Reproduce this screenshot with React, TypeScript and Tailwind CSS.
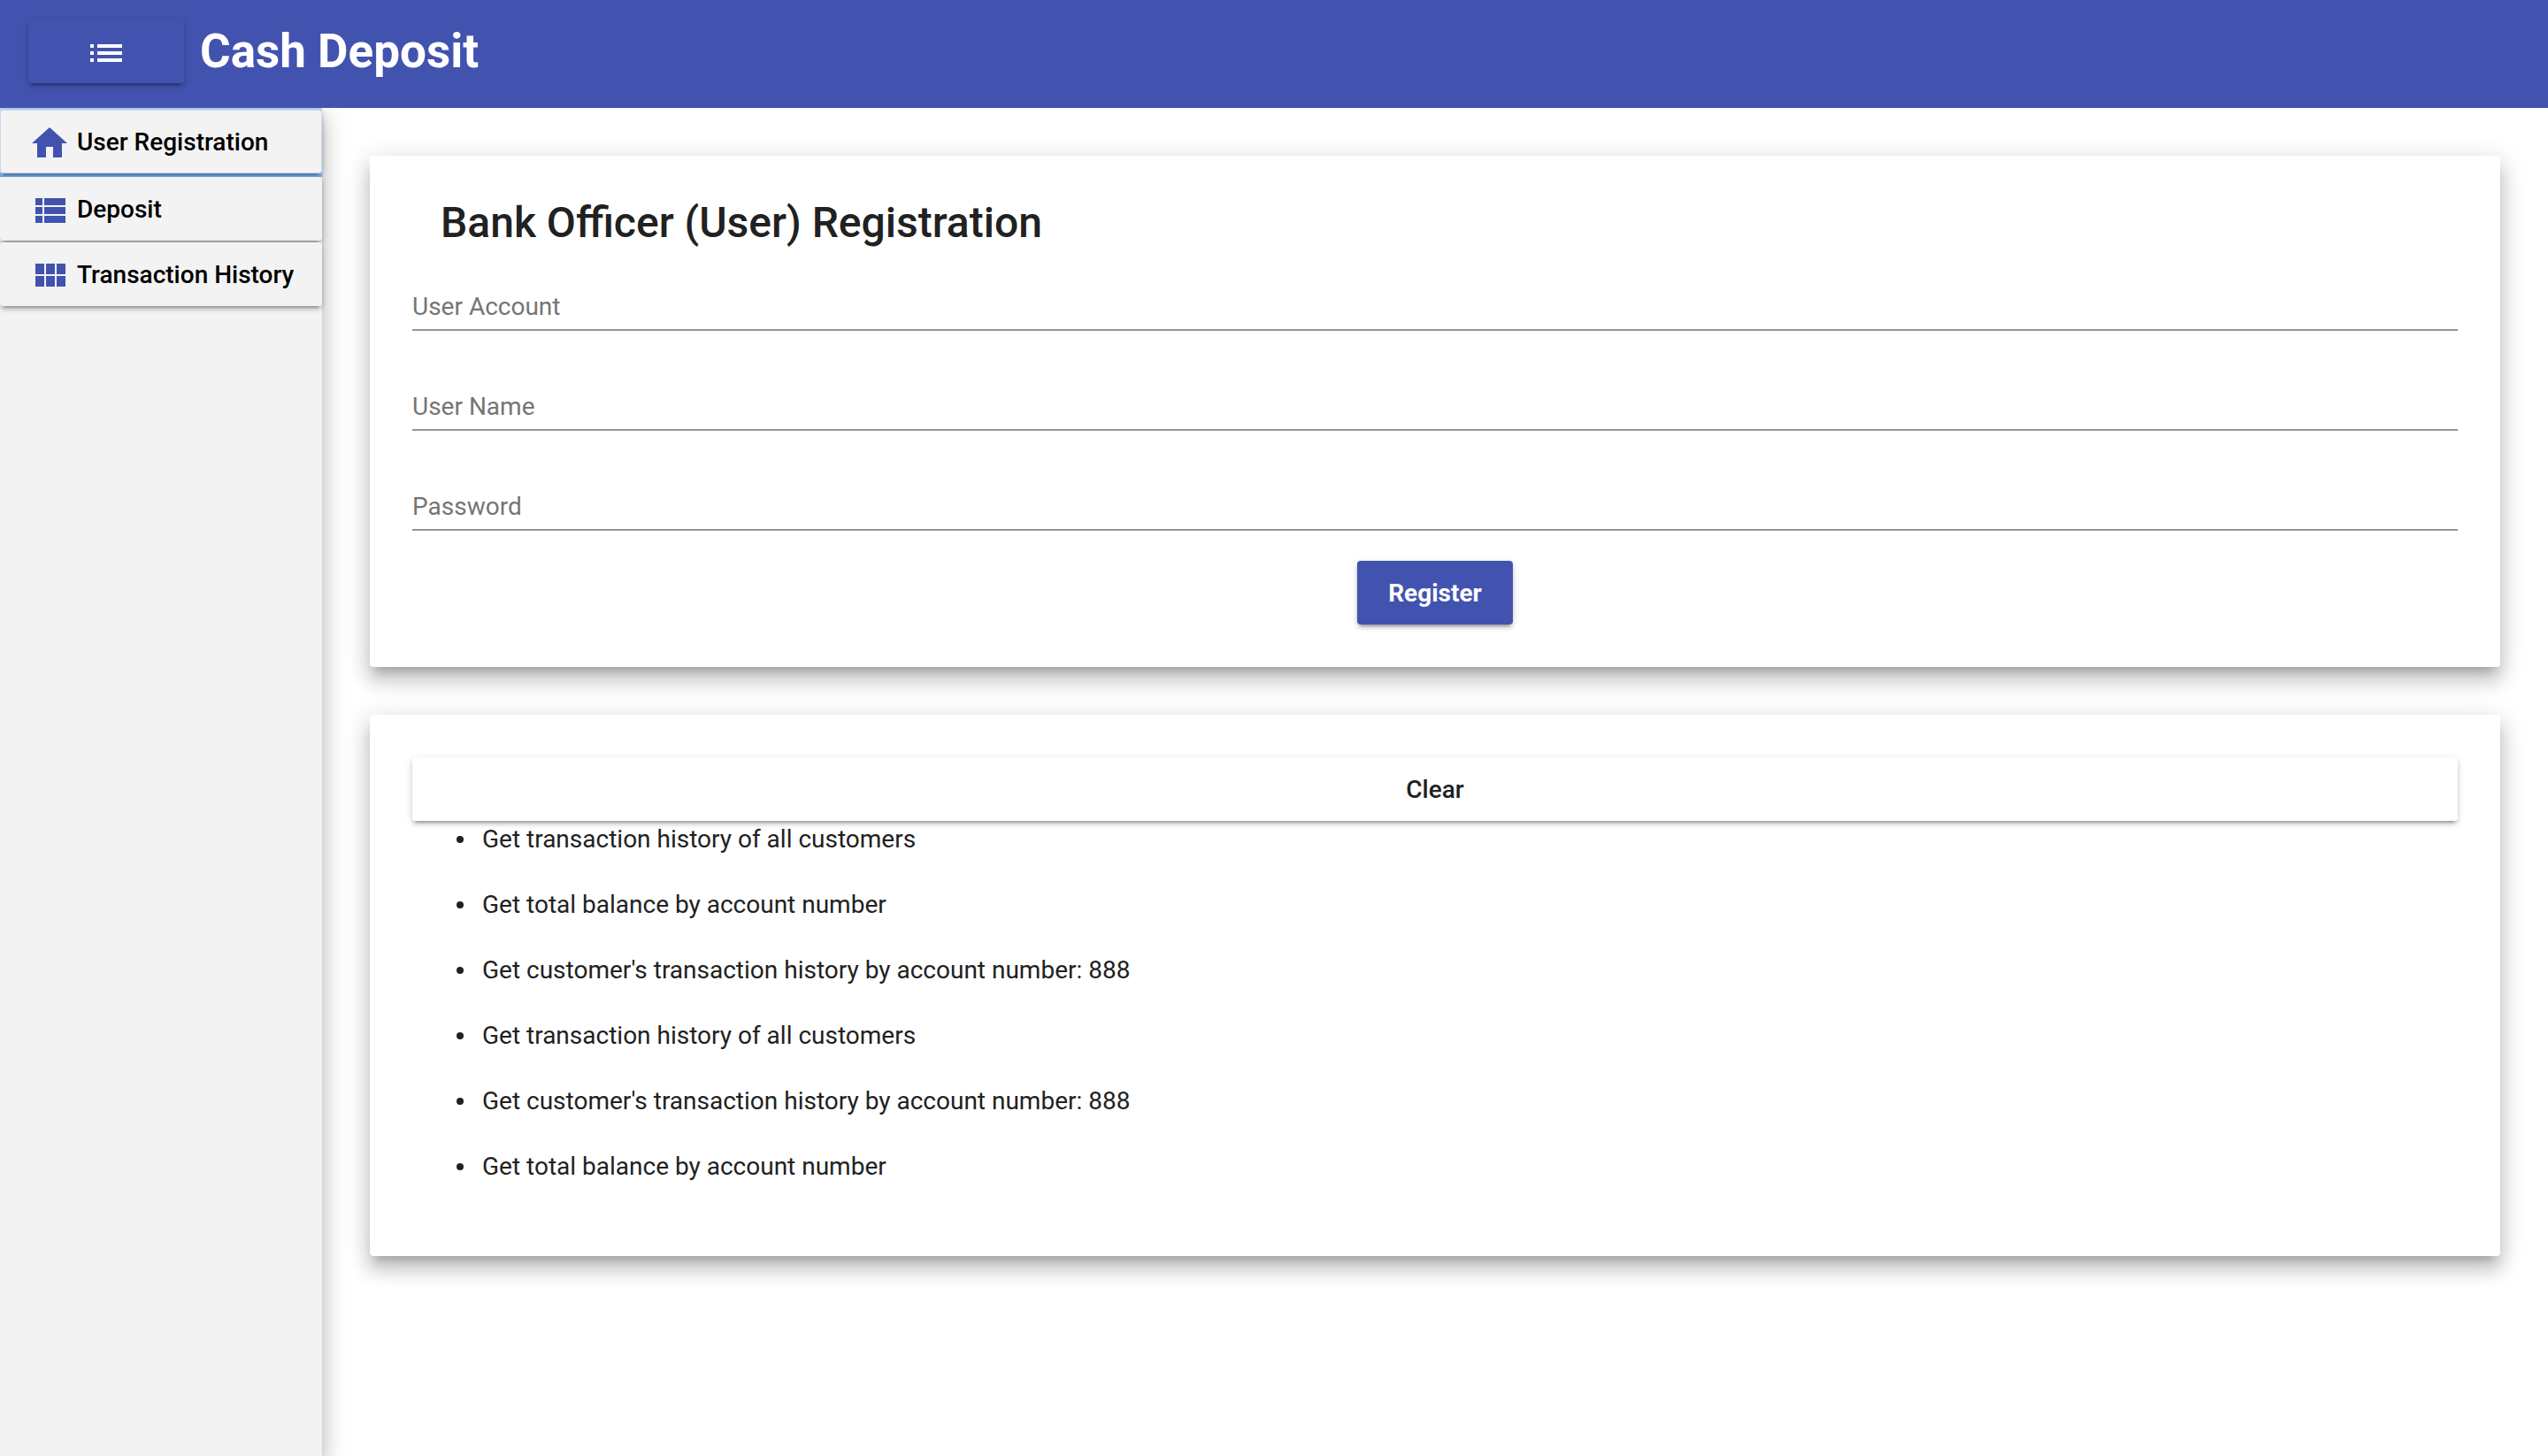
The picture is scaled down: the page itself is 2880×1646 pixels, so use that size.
import type { ReactNode } from "react";

const raised =
  "rounded shadow-[0_6px_2px_-4px_rgba(0,0,0,0.2),0_4px_4px_0_rgba(0,0,0,0.14),0_2px_10px_0_rgba(0,0,0,0.12)]";
const elevated =
  "shadow-[0_10px_10px_-6px_rgba(0,0,0,0.2),0_16px_20px_2px_rgba(0,0,0,0.14),0_6px_28px_4px_rgba(0,0,0,0.12)]";

function Icon({ d }: { d: string }) {
  return (
    <svg className="size-12 shrink-0" viewBox="0 0 24 24" fill="currentColor" aria-hidden="true">
      <path d={d} />
    </svg>
  );
}

const LIST =
  "M3 13h2v-2H3v2zm0 4h2v-2H3v2zm0-8h2V7H3v2zm4 4h14v-2H7v2zm0 4h14v-2H7v2zM7 7v2h14V7H7z";
const HOME = "M10 20v-6h4v6h5v-8h3L12 3 2 12h3v8z";
const VIEW_LIST =
  "M4 14h4v-4H4v4zm0 5h4v-4H4v4zM4 9h4V5H4v4zm5 5h12v-4H9v4zm0 5h12v-4H9v4zM9 5v4h12V5H9z";
const VIEW_MODULE =
  "M4 11h5V5H4v6zm0 7h5v-6H4v6zm6 0h5v-6h-5v6zm6 0h5v-6h-5v6zm-6-7h5V5h-5v6zm6-6v6h5V5h-5z";

function NavItem({ icon, label, focused = false }: { icon: string; label: string; focused?: boolean }) {
  return (
    <div
      className={
        focused ? "bg-linear-to-b from-[#b9d0f1] from-90% to-[#7fb5ff] to-98% pt-0.5 pb-1" : "pb-0.5"
      }
    >
      <button
        type="button"
        className={`flex h-[72px] w-full items-center gap-[7px] bg-[#f3f3f3] pt-0.5 pl-8 text-[28px] font-medium text-black ${raised} ${
          focused ? "inset-ring-1 inset-ring-[#c9daf3]" : ""
        }`}
      >
        <span className="mt-0.5 text-[#4253af]">
          <Icon d={icon} />
        </span>
        <span>{label}</span>
      </button>
    </div>
  );
}

/* The label rests on the input's line and gives way once something is typed. */
function Field({ id, label, type = "text" }: { id: string; label: string; type?: string }) {
  return (
    <div className="grid border-b-2 border-[#949494]">
      <input
        id={id}
        type={type}
        placeholder=" "
        className="peer col-start-1 row-start-1 h-14 w-full bg-transparent pt-1 text-[28px] outline-none"
      />
      <label
        htmlFor={id}
        className="invisible col-start-1 row-start-1 cursor-text self-center pt-1.5 text-[28px] leading-9 text-[#757575] peer-placeholder-shown:visible"
      >
        {label}
      </label>
    </div>
  );
}

function Card({ children }: { children: ReactNode }) {
  return <section className={`rounded bg-white p-12 ${elevated}`}>{children}</section>;
}

const messages = [
  "Get transaction history of all customers",
  "Get total balance by account number",
  "Get customer's transaction history by account number: 888",
  "Get transaction history of all customers",
  "Get customer's transaction history by account number: 888",
  "Get total balance by account number",
];

export default function App() {
  return (
    <div className="flex min-h-screen flex-col bg-white font-[Roboto,sans-serif] text-[#212121]">
      <header className="relative z-10 flex h-[122px] items-start gap-[18px] bg-[#4253af] pt-[22px] pl-8 text-white">
        <button
          type="button"
          aria-label="Toggle menu"
          className={`flex h-[72px] w-44 items-center justify-center pt-1 ${raised}`}
        >
          <Icon d={LIST} />
        </button>
        <h1 className="text-[53px] leading-[72px] font-bold">Cash Deposit</h1>
      </header>
      <div className="flex grow">
        <nav className={`w-[364px] shrink-0 bg-[#f3f3f3] ${elevated}`}>
          <NavItem icon={HOME} label="User Registration" focused />
          <NavItem icon={VIEW_LIST} label="Deposit" />
          <NavItem icon={VIEW_MODULE} label="Transaction History" />
        </nav>
        <main className="flex grow flex-col gap-[54px] p-[54px]">
          <Card>
            <h2 className="ml-8 text-[48px] leading-14 font-medium">Bank Officer (User) Registration</h2>
            <form className="mt-9" onSubmit={(e) => e.preventDefault()}>
              <div className="flex flex-col gap-[55px]">
                <Field id="user-account" label="User Account" />
                <Field id="user-name" label="User Name" />
                <Field id="password" label="Password" type="password" />
              </div>
              <div className="mt-[34px] flex justify-center">
                <button
                  type="submit"
                  className={`h-[72px] w-44 bg-[#4253af] pt-0.5 text-[28px] font-bold text-white ${raised}`}
                >
                  Register
                </button>
              </div>
            </form>
          </Card>
          <Card>
            <button
              type="button"
              className={`h-[72px] w-full bg-white pt-0.5 text-[28px] font-medium ${raised}`}
            >
              Clear
            </button>
            <ul className="flex flex-col gap-[38px] pt-[3px] pb-[35px] pl-[50px] text-[28px] leading-9">
              {messages.map((message, i) => (
                <li key={i} className="flex items-center gap-[21px]">
                  <span className="size-2 shrink-0 rounded-full bg-[#212121]" />
                  {message}
                </li>
              ))}
            </ul>
          </Card>
        </main>
      </div>
    </div>
  );
}
